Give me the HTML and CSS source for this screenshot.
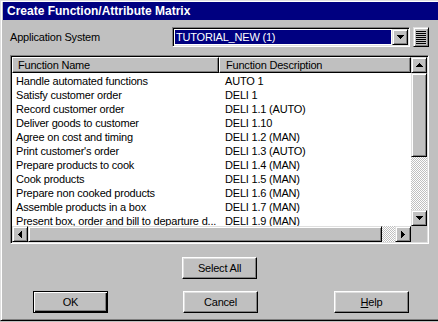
FILE: index.html
```html
<!DOCTYPE html>
<html lang="en">
<head>
  <meta charset="UTF-8" />
  <title>Create Function/Attribute Matrix</title>
  <link rel="stylesheet" href="styles.css">
</head>
<body>
  <div class="window">
    <div class="titlebar">Create Function/Attribute Matrix</div>
    <div class="dialog">

      <div class="app-row">
        <label class="app-label">Application System</label>
        <div class="combo">
          <div class="combo-value">TUTORIAL_NEW (1)</div>
          <div class="raised combo-btn">
            <svg width="7" height="4" viewBox="0 0 7 4"><path d="M0 0h7v1H0z M1 1h5v1H1z M2 2h3v1H2z M3 3h1v1H3z"/></svg>
          </div>
        </div>
        <div class="raised list-btn">
          <svg width="10" height="13" viewBox="0 0 10 13"><path d="M0 0h10v1H0z M0 2h10v1H0z M0 4h10v1H0z M0 6h10v1H0z M0 8h10v1H0z M0 10h10v1H0z M0 12h10v1H0z"/></svg>
        </div>
      </div>

      <div class="listbox">
        <div class="list-main">
          <div class="list-view">
            <div class="list-header">
              <div class="hcell c1">Function Name</div>
              <div class="hcell c2">Function Description</div>
            </div>
            <div class="list-rows" id="rows"></div>
          </div>
          <div class="vscroll">
            <div class="raised sbtn">
              <svg width="7" height="4" viewBox="0 0 7 4"><path d="M3 0h1v1H3z M2 1h3v1H2z M1 2h5v1H1z M0 3h7v1H0z"/></svg>
            </div>
            <div class="raised vthumb"></div>
            <div class="track"></div>
            <div class="raised sbtn">
              <svg width="7" height="4" viewBox="0 0 7 4"><path d="M0 0h7v1H0z M1 1h5v1H1z M2 2h3v1H2z M3 3h1v1H3z"/></svg>
            </div>
          </div>
        </div>
        <div class="hscroll-row">
          <div class="hscroll">
            <div class="raised sbtn">
              <svg width="4" height="7" viewBox="0 0 4 7"><path d="M3 0h1v7H3z M2 1h1v5H2z M1 2h1v3H1z M0 3h1v1H0z"/></svg>
            </div>
            <div class="raised hthumb"></div>
            <div class="track"></div>
            <div class="raised sbtn">
              <svg width="4" height="7" viewBox="0 0 4 7"><path d="M0 0h1v7H0z M1 1h1v5H1z M2 2h1v3H2z M3 3h1v1H3z"/></svg>
            </div>
          </div>
          <div class="corner"></div>
        </div>
      </div>

      <div class="select-row">
        <button class="button">Select All</button>
      </div>

      <div class="action-row">
        <button class="button default">OK</button>
        <button class="button cancel">Cancel</button>
        <button class="button help"><u>H</u>elp</button>
      </div>

    </div>
  </div>

  <script>
    const functions = [
      ['Handle automated functions', 'AUTO 1'],
      ['Satisfy customer order', 'DELI 1'],
      ['Record customer order', 'DELI 1.1 (AUTO)'],
      ['Deliver goods to customer', 'DELI 1.10'],
      ['Agree on cost and timing', 'DELI 1.2 (MAN)'],
      ["Print customer's order", 'DELI 1.3 (AUTO)'],
      ['Prepare products to cook', 'DELI 1.4 (MAN)'],
      ['Cook products', 'DELI 1.5 (MAN)'],
      ['Prepare non cooked products', 'DELI 1.6 (MAN)'],
      ['Assemble products in a box', 'DELI 1.7 (MAN)'],
      ['Present box, order and bill to departure d...', 'DELI 1.9 (MAN)']
    ];
    const rows = document.getElementById('rows');
    functions.forEach(f => {
      const row = document.createElement('div');
      row.className = 'row';
      row.innerHTML = `<div class="cell c1">${f[0]}</div><div class="cell c2">${f[1]}</div>`;
      rows.appendChild(row);
    });
  </script>
</body>
</html>
```

FILE: styles.css
```css
:root {
  --face: #c0c0c0;
  --light: #dfdfdf;
  --shadow: #808080;
  --navy: #000080;
}
body {
  margin: 0;
  background: var(--face);
  font-family: "Liberation Sans", Arial, sans-serif;
  font-size: 11px;
  letter-spacing: -0.2px;
  color: #000;
  overflow: hidden;
}
.window {
  box-sizing: border-box;
  width: 438px;
  height: 321px;
  border-left: 1px solid var(--light);
  border-top: 1px solid var(--light);
  border-bottom: 1px solid #000;
  box-shadow: inset 1px 1px #fff, inset 0 -1px var(--shadow);
  padding: 1px 0 0 2px;
}
.titlebar {
  height: 18px;
  line-height: 18px;
  background: var(--navy);
  color: #fff;
  font-weight: bold;
  font-size: 12px;
  letter-spacing: 0;
  padding-left: 4px;
}
.dialog {
  padding: 7px 0 0 7px;
}

/* 3d bits */
.raised {
  box-sizing: border-box;
  background: var(--face);
  border: 1px solid;
  border-color: var(--light) #000 #000 var(--light);
  box-shadow: inset 1px 1px #fff, inset -1px -1px var(--shadow);
  display: flex;
  align-items: center;
  justify-content: center;
}
.track {
  flex: 1;
  background-image: conic-gradient(#fff 25%, var(--face) 0 50%, #fff 0 75%, var(--face) 0);
  background-size: 2px 2px;
}

/* application system row */
.app-row {
  display: flex;
  align-items: center;
  height: 20px;
}
.app-label {
  width: 162px;
}
.combo {
  box-sizing: border-box;
  width: 238px;
  height: 20px;
  display: flex;
  padding: 1px;
  background: #fff;
  border: 1px solid;
  border-color: var(--shadow) #fff #fff var(--shadow);
  box-shadow: inset 1px 1px #000, inset -1px -1px var(--light);
}
.combo-value {
  flex: 1;
  margin: 1px;
  background: var(--navy);
  color: #fff;
  line-height: 14px;
  padding-left: 1px;
}
.combo-btn {
  width: 16px;
  height: 16px;
}
.list-btn {
  width: 16px;
  height: 20px;
  margin-left: 3px;
}

/* list */
.listbox {
  box-sizing: border-box;
  width: 419px;
  height: 189px;
  margin-top: 8px;
  padding: 1px;
  background: #fff;
  border: 1px solid;
  border-color: var(--shadow) #fff #fff var(--shadow);
  box-shadow: inset 1px 1px #000, inset -1px -1px var(--light);
}
.list-main {
  display: flex;
  height: 169px;
}
.list-view {
  width: 399px;
  overflow: hidden;
}
.list-header {
  display: flex;
  height: 16px;
}
.hcell {
  box-sizing: border-box;
  height: 16px;
  line-height: 14px;
  background: var(--face);
  border: 1px solid;
  border-color: #fff #000 #000 #fff;
  box-shadow: inset -1px -1px var(--shadow);
  white-space: nowrap;
}
.hcell.c1 {
  width: 207px;
  padding-left: 5px;
}
.hcell.c2 {
  flex: 1;
  padding-left: 6px;
}
.list-rows {
  height: 153px;
  overflow: hidden;
  padding-top: 1px;
  box-sizing: border-box;
}
.row {
  display: flex;
  height: 14px;
  line-height: 14px;
  white-space: nowrap;
}
.cell.c1 {
  width: 203px;
  padding-left: 4px;
  overflow: hidden;
}
.cell.c2 {
  padding-left: 6px;
}
.vscroll {
  width: 16px;
  display: flex;
  flex-direction: column;
}
.sbtn {
  width: 16px;
  height: 16px;
  flex: none;
}
.vthumb {
  height: 84px;
}
.hscroll-row {
  display: flex;
  height: 16px;
}
.hscroll {
  width: 399px;
  display: flex;
}
.hthumb {
  width: 354px;
}
.corner {
  width: 16px;
  background: var(--face);
}

/* buttons */
.button {
  box-sizing: border-box;
  width: 75px;
  height: 22px;
  padding: 0;
  font-family: inherit;
  font-size: 11px;
  letter-spacing: -0.2px;
  color: #000;
  background: var(--face);
  border: 1px solid;
  border-color: #fff #000 #000 #fff;
  box-shadow: inset -1px -1px var(--shadow), inset 1px 1px var(--light);
}
.button.default {
  border-color: #000;
  box-shadow: inset 1px 1px #fff, inset -1px -1px #000, inset -2px -2px var(--shadow);
}
.select-row {
  width: 419px;
  display: flex;
  justify-content: center;
  margin-top: 13px;
}
.action-row {
  display: flex;
  margin-top: 12px;
  padding-left: 23px;
}
.button.cancel {
  margin-left: 75px;
}
.button.help {
  margin-left: 76px;
}
```
